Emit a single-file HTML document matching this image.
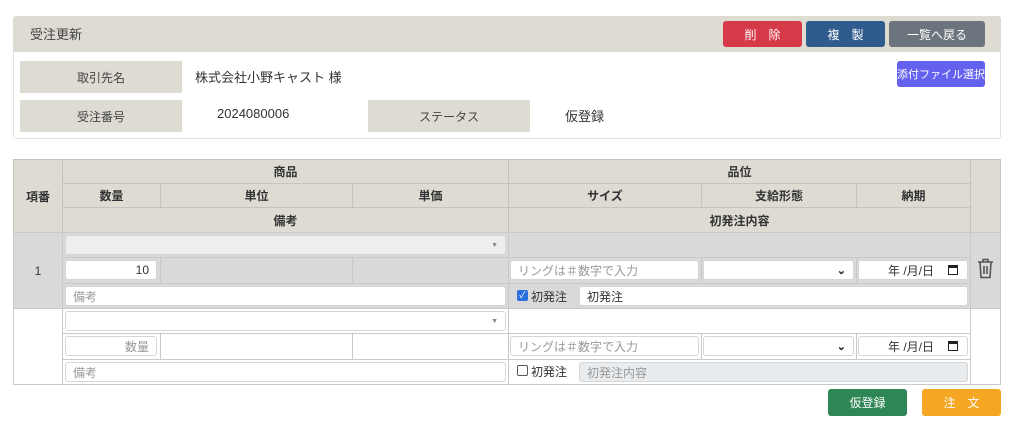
<!DOCTYPE html><html><head><meta charset="utf-8"><style>
*{box-sizing:border-box;margin:0;padding:0}
body{width:1024px;height:426px;background:#fff;position:relative;font-family:"Liberation Sans","Noto Sans CJK JP",sans-serif;font-size:13px;color:#333;overflow:hidden}
div,span{position:absolute;white-space:nowrap}
.c{display:flex;align-items:center;justify-content:center}
.btn{color:#fff;border-radius:3px;font-size:12px;display:flex;align-items:center;justify-content:center}
.lab{background:#dedbd3;display:flex;align-items:center;justify-content:center;font-size:12px;color:#444}
.h{background:#dedbd3;border:1px solid #c4c4c4;display:flex;align-items:center;justify-content:center;font-weight:bold;font-size:12px;color:#333}
.cell{border:1px solid #c9c9c9}
.in{background:#fff;border:1px solid #d6d6d6;border-radius:3px;font-size:12px;color:#999;display:flex;align-items:center;padding:0 7px}
.cal{position:static;display:inline-block;width:10px;height:10px;border:1.5px solid #222;border-top-width:3px;margin-left:14px;margin-right:2px}
</style></head><body>
<div style="left:13px;top:16px;width:988px;height:123px;border:1px solid #e2e2e2;border-radius:3px"></div>
<div style="left:13px;top:16px;width:988px;height:36px;background:#dedbd3;border-radius:3px 3px 0 0"></div>
<div style="left:30px;top:24px;font-size:13px;color:#444">受注更新</div>
<div class="btn" style="left:723px;top:21px;width:79px;height:26px;background:#d63a49">削　除</div>
<div class="btn" style="left:806px;top:21px;width:79px;height:26px;background:#2f5b8d">複　製</div>
<div class="btn" style="left:889px;top:21px;width:96px;height:26px;background:#6c757d">一覧へ戻る</div>
<div class="btn" style="left:897px;top:61px;width:88px;height:26px;background:#6461ee;font-size:11px">添付ファイル選択</div>
<div class="lab" style="left:20px;top:61px;width:162px;height:32px">取引先名</div>
<div class="lab" style="left:20px;top:100px;width:162px;height:32px">受注番号</div>
<div class="lab" style="left:368px;top:100px;width:162px;height:32px">ステータス</div>
<div style="left:195px;top:67px;font-size:13px">株式会社小野キャスト 様</div>
<div style="left:217px;top:106px;font-size:13px">2024080006</div>
<div style="left:565px;top:106px;font-size:13px">仮登録</div>

<div style="left:13px;top:159px;width:988px;height:226px;border:1px solid #bbb;background:#fff"></div>
<div class="h" style="left:13px;top:159px;width:50px;height:74px">項番</div>
<div class="h" style="left:62px;top:159px;width:447px;height:25px">商品</div>
<div class="h" style="left:508px;top:159px;width:463px;height:25px">品位</div>
<div class="h" style="left:62px;top:183px;width:99px;height:25px">数量</div>
<div class="h" style="left:160px;top:183px;width:193px;height:25px">単位</div>
<div class="h" style="left:352px;top:183px;width:157px;height:25px">単価</div>
<div class="h" style="left:508px;top:183px;width:194px;height:25px">サイズ</div>
<div class="h" style="left:701px;top:183px;width:156px;height:25px">支給形態</div>
<div class="h" style="left:856px;top:183px;width:115px;height:25px">納期</div>
<div class="h" style="left:62px;top:207px;width:447px;height:26px">備考</div>
<div class="h" style="left:508px;top:207px;width:463px;height:26px">初発注内容</div>
<div class="h" style="left:970px;top:159px;width:31px;height:74px"></div>

<div style="left:13px;top:232px;width:988px;height:77px;background:#d9d9d9"></div>
<div class="cell c" style="left:13px;top:232px;width:50px;height:77px;font-size:12px">1</div>
<div class="cell" style="left:62px;top:232px;width:447px;height:26px"></div>
<div class="cell" style="left:508px;top:232px;width:463px;height:26px"></div>
<div class="cell" style="left:62px;top:257px;width:99px;height:27px"></div>
<div class="cell" style="left:160px;top:257px;width:193px;height:27px"></div>
<div class="cell" style="left:352px;top:257px;width:157px;height:27px"></div>
<div class="cell" style="left:508px;top:257px;width:194px;height:27px"></div>
<div class="cell" style="left:701px;top:257px;width:156px;height:27px"></div>
<div class="cell" style="left:856px;top:257px;width:115px;height:27px"></div>
<div class="cell" style="left:62px;top:283px;width:447px;height:26px"></div>
<div class="cell" style="left:508px;top:283px;width:463px;height:26px"></div>
<div class="cell" style="left:970px;top:232px;width:31px;height:77px"></div>
<div class="in" style="left:65px;top:235px;width:441px;height:20px;background:#eee;justify-content:flex-end;font-size:7px;color:#888">▼</div>
<div class="in" style="left:65px;top:260px;width:92px;height:20px;justify-content:flex-end;color:#333">10</div>
<div class="in" style="left:510px;top:260px;width:189px;height:20px">リングは＃数字で入力</div>
<div class="in" style="left:703px;top:260px;width:151px;height:20px;justify-content:flex-end;color:#222;font-size:11px;font-weight:bold">⌄</div>
<div class="in" style="left:858px;top:260px;width:110px;height:20px;color:#333;justify-content:flex-end">年 /月/日<span class="cal"></span></div>
<div class="in" style="left:65px;top:286px;width:441px;height:20px">備考</div>
<div style="left:517px;top:290px;width:11px;height:11px;background:#2d6fe0;border-radius:2px;color:#fff;font-size:9px;line-height:11px;text-align:center">✓</div>
<div style="left:531px;top:288px;font-size:12px">初発注</div>
<div class="in" style="left:579px;top:286px;width:389px;height:20px;color:#333">初発注</div>
<svg style="position:absolute;left:977px;top:258px" width="17" height="21" viewBox="0 0 17 21" fill="none" stroke="#555" stroke-width="1.6"><path d="M1 4h15M6 4V1.5h5V4M3 4l1 15.5h9L14 4M7 8v8M10 8v8"/></svg>

<div class="cell" style="left:13px;top:308px;width:50px;height:77px"></div>
<div class="cell" style="left:62px;top:308px;width:447px;height:26px"></div>
<div class="cell" style="left:508px;top:308px;width:463px;height:26px"></div>
<div class="cell" style="left:62px;top:333px;width:99px;height:27px"></div>
<div class="cell" style="left:160px;top:333px;width:193px;height:27px"></div>
<div class="cell" style="left:352px;top:333px;width:157px;height:27px"></div>
<div class="cell" style="left:508px;top:333px;width:194px;height:27px"></div>
<div class="cell" style="left:701px;top:333px;width:156px;height:27px"></div>
<div class="cell" style="left:856px;top:333px;width:115px;height:27px"></div>
<div class="cell" style="left:62px;top:359px;width:447px;height:26px"></div>
<div class="cell" style="left:508px;top:359px;width:463px;height:26px"></div>
<div class="cell" style="left:970px;top:308px;width:31px;height:77px"></div>
<div class="in" style="left:65px;top:311px;width:441px;height:20px;justify-content:flex-end;font-size:7px;color:#888">▼</div>
<div class="in" style="left:65px;top:336px;width:92px;height:20px;justify-content:flex-end">数量</div>
<div class="in" style="left:510px;top:336px;width:189px;height:20px">リングは＃数字で入力</div>
<div class="in" style="left:703px;top:336px;width:151px;height:20px;justify-content:flex-end;color:#222;font-size:11px;font-weight:bold">⌄</div>
<div class="in" style="left:858px;top:336px;width:110px;height:20px;color:#333;justify-content:flex-end">年 /月/日<span class="cal"></span></div>
<div class="in" style="left:65px;top:362px;width:441px;height:20px">備考</div>
<div style="left:517px;top:365px;width:11px;height:11px;border:1px solid #555;border-radius:2px;background:#fff"></div>
<div style="left:531px;top:363px;font-size:12px">初発注</div>
<div class="in" style="left:579px;top:362px;width:389px;height:20px;background:#e9ecef">初発注内容</div>

<div class="btn" style="left:828px;top:389px;width:79px;height:27px;background:#2e8555">仮登録</div>
<div class="btn" style="left:922px;top:389px;width:79px;height:27px;background:#f5a623">注　文</div>
</body></html>
